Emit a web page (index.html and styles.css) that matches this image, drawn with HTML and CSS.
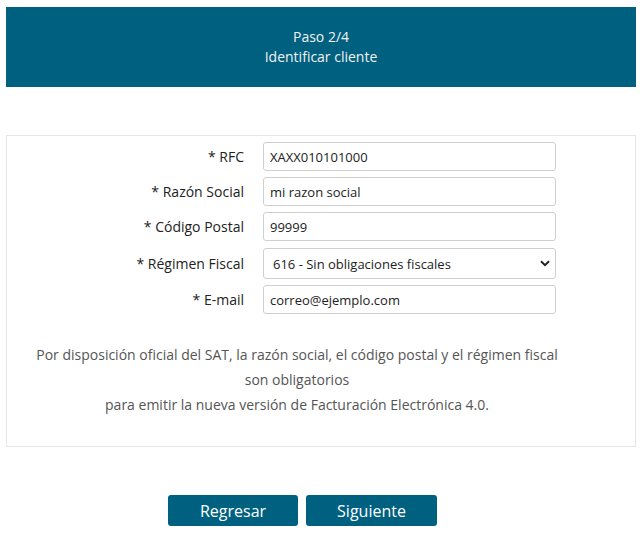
FILE: index.html
```html
<!DOCTYPE html>
<html lang="es">
<head>
<meta charset="utf-8">
<title>Paso 2/4</title>
<link rel="stylesheet" href="styles.css">
</head>
<body>
<div class="page">
  <header class="step-header">
    <div>Paso 2/4</div>
    <div>Identificar cliente</div>
  </header>

  <section class="card">
    <form class="form-grid">
      <label class="lbl" for="rfc">* RFC</label>
      <input class="ctl" id="rfc" type="text" value="XAXX010101000">

      <label class="lbl" for="razon">* Razón Social</label>
      <input class="ctl" id="razon" type="text" value="mi razon social">

      <label class="lbl" for="cp">* Código Postal</label>
      <input class="ctl" id="cp" type="text" value="99999">

      <label class="lbl" for="regimen">* Régimen Fiscal</label>
      <div class="select-wrap">
        <select class="ctl sel" id="regimen">
          <option>616 - Sin obligaciones fiscales</option>
        </select>
        <svg class="chev" width="10" height="7" viewBox="0 0 10 7"><path d="M1 1.2 L5 5.2 L9 1.2" fill="none" stroke="#222" stroke-width="2"/></svg>
      </div>

      <label class="lbl" for="email">* E-mail</label>
      <input class="ctl" id="email" type="text" value="correo@ejemplo.com">
    </form>

    <p class="note">Por disposición oficial del SAT, la razón social, el código postal y el régimen fiscal<br>son obligatorios<br>para emitir la nueva versión de Facturación Electrónica 4.0.</p>
  </section>

  <div class="actions">
    <button class="btn" type="button">Regresar</button>
    <button class="btn" type="button">Siguiente</button>
  </div>
</div>
</body>
</html>
```
FILE: styles.css
```css
* { box-sizing: border-box; }
html, body { margin: 0; padding: 0; background: #fff; }
body { font-family: "Open Sans", "Noto Sans", sans-serif; color: #222; }

.page { padding: 7px 7px 0 6px; width: 643px; }

.step-header {
  background: #00607f;
  color: #f2f2f2;
  height: 80px;
  width: 630px;
  display: flex;
  flex-direction: column;
  justify-content: center;
  align-items: center;
  font-size: 14px;
  line-height: 20px;
  padding-bottom: 1px;
}

.card {
  margin-top: 48px;
  width: 630px;
  border: 1px solid #e6e6e6;
  padding: 6px 0 29px 0;
}

.form-grid {
  display: grid;
  grid-template-columns: 237px 293px;
  column-gap: 19px;
  row-gap: 6px;
  align-items: center;
  margin: 0;
}
.form-grid .select-wrap { margin-top: 1px; }

.lbl {
  text-align: right;
  font-size: 14px;
  color: #222;
}

.ctl {
  height: 29px;
  width: 293px;
  border: 1px solid #cfcfcf;
  border-radius: 3px;
  font-family: "Open Sans", "Noto Sans", sans-serif;
  font-size: 13px;
  color: #222;
  padding: 0 6px;
  background: #fff;
  outline: none;
}

.select-wrap { position: relative; width: 293px; }
.sel {
  height: 31px;
  appearance: none;
  -webkit-appearance: none;
  padding-left: 9px;
}
.chev { position: absolute; right: 6px; top: 12px; pointer-events: none; }

.note {
  margin: 28px 0 0 0;
  width: 580px;
  text-align: center;
  font-size: 14px;
  line-height: 25px;
  color: #555;
}

.actions {
  display: flex;
  gap: 8px;
  padding-left: 162px;
  margin-top: 48px;
}
.btn {
  width: 130px;
  height: 31px;
  background: #00607f;
  color: #fff;
  border: none;
  border-radius: 3px;
  font-family: "Open Sans", "Noto Sans", sans-serif;
  font-size: 16px;
  padding: 0;
}
.btn + .btn { width: 131px; }
```
